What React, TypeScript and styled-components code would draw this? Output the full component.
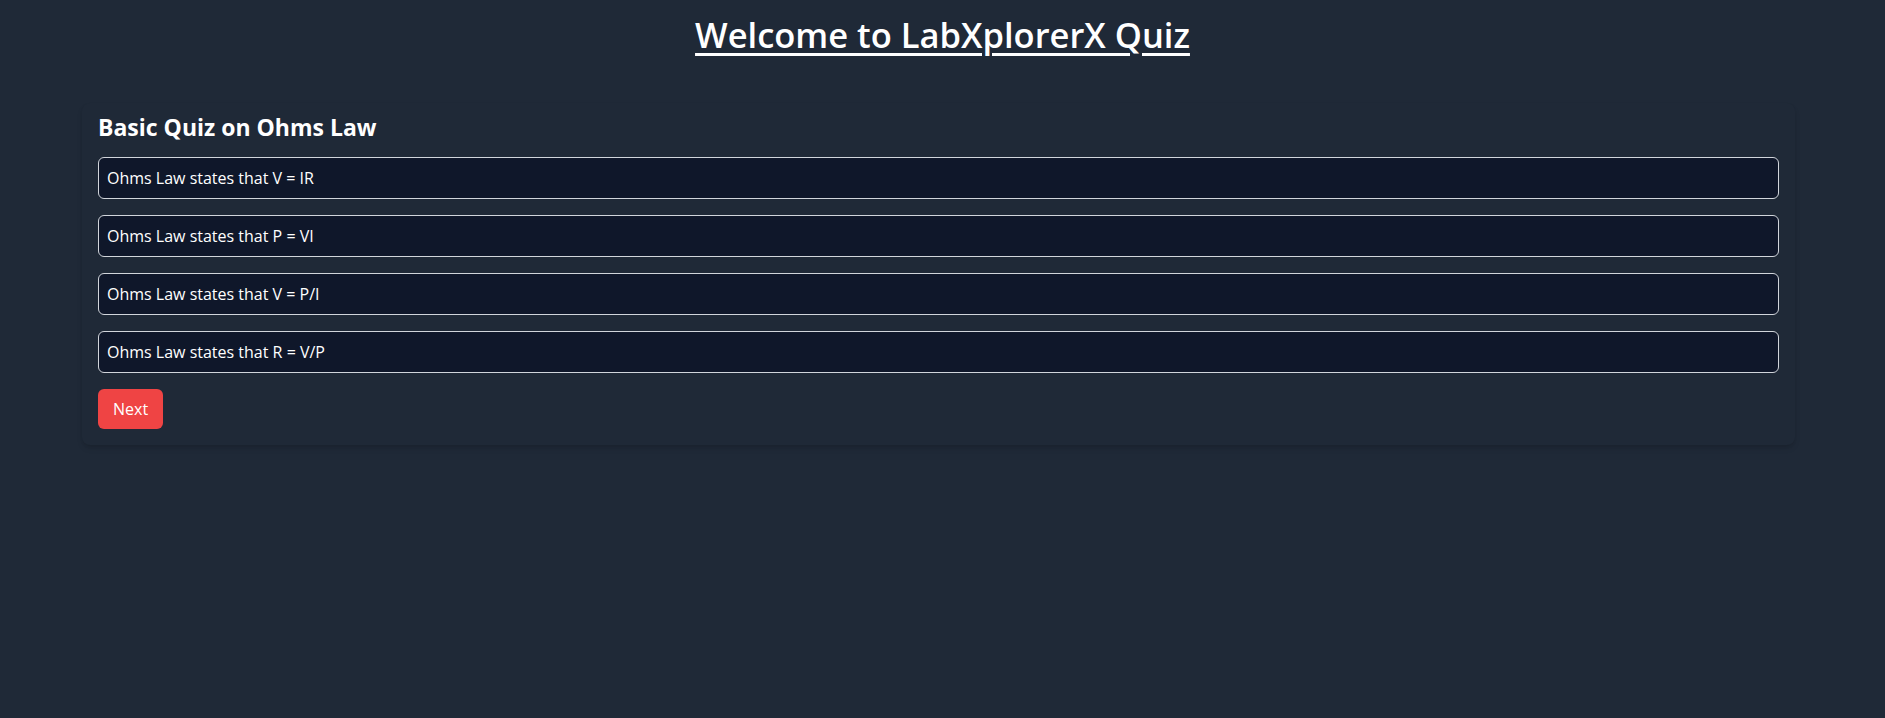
import React from "react";
import styled, { createGlobalStyle } from "styled-components";

const Global = createGlobalStyle`
  html, body { margin: 0; padding: 0; background: #1f2937; }
  body { font-family: "Segoe UI", "Open Sans", sans-serif; color: #ffffff; }
  * { box-sizing: border-box; }
`;

const Page = styled.div`
  min-height: 718px;
  background: #1f2937;
  display: flex;
  flex-direction: column;
  align-items: center;
  padding: 15px 0 0;
`;

const Title = styled.h1`
  margin: 0;
  font-size: 34.5px;
  line-height: 40px;
  font-weight: 600;
  text-decoration: underline;
  text-underline-offset: 5px;
  text-decoration-thickness: 3px;
  color: #ffffff;
`;

const Card = styled.section`
  margin: 48px 90px 0 82px;
  align-self: stretch;
  background: #1f2937;
  border-radius: 8px;
  box-shadow: 0 4px 6px -1px rgba(0, 0, 0, 0.12), 0 2px 4px -2px rgba(0, 0, 0, 0.12);
  padding: 10px 16px 16px;
  display: flex;
  flex-direction: column;
  gap: 16px;
`;

const CardTitle = styled.h2`
  margin: 0;
  font-size: 23px;
  line-height: 28px;
  font-weight: 700;
`;

const Options = styled.div`
  display: flex;
  flex-direction: column;
  gap: 16px;
`;

const Option = styled.button`
  display: block;
  width: 100%;
  text-align: left;
  background: #0f172a;
  color: #ffffff;
  border: 1px solid #d1d5db;
  border-radius: 6px;
  padding: 8px 8px;
  font-family: inherit;
  font-size: 16px;
  line-height: 24px;
  cursor: pointer;
`;

const NextButton = styled.button`
  align-self: flex-start;
  background: #ef4444;
  color: #ffffff;
  border: none;
  border-radius: 6px;
  padding: 8px 15px;
  font-family: inherit;
  font-size: 16px;
  line-height: 24px;
  cursor: pointer;
`;

const options = [
  "Ohms Law states that V = IR",
  "Ohms Law states that P = VI",
  "Ohms Law states that V = P/I",
  "Ohms Law states that R = V/P",
];

export default function App() {
  return (
    <>
      <Global />
      <Page>
        <Title>Welcome to LabXplorerX Quiz</Title>
        <Card>
          <CardTitle>Basic Quiz on Ohms Law</CardTitle>
          <Options>
            {options.map((o) => (
              <Option key={o}>{o}</Option>
            ))}
          </Options>
          <NextButton>Next</NextButton>
        </Card>
      </Page>
    </>
  );
}
